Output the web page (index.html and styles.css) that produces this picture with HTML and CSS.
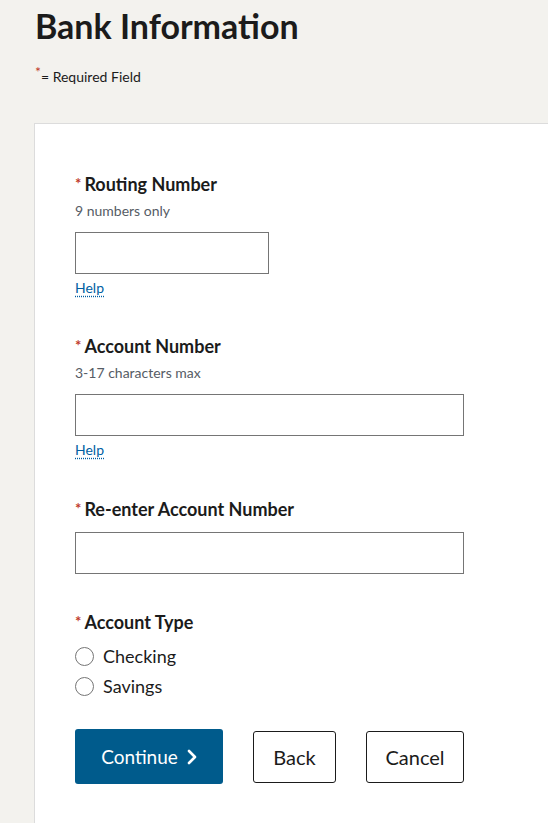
FILE: index.html
```html
<!DOCTYPE html>
<html lang="en">
<head>
<meta charset="utf-8">
<title>Bank Information</title>
<link rel="stylesheet" href="styles.css">
</head>
<body>
<div class="page">
  <h1 class="title">Bank Information</h1>
  <p class="required-note"><span class="req-star">*</span>= Required Field</p>
  <form class="card">
    <div class="field field-first">
      <label class="label" for="routing"><span class="star">*</span>Routing Number</label>
      <div class="hint">9 numbers only</div>
      <input class="input input-short" id="routing" type="text">
      <a class="help" href="#">Help</a>
    </div>
    <div class="field">
      <label class="label" for="account"><span class="star">*</span>Account Number</label>
      <div class="hint">3-17 characters max</div>
      <input class="input" id="account" type="text">
      <a class="help" href="#">Help</a>
    </div>
    <div class="field field-last">
      <label class="label" for="reaccount"><span class="star">*</span>Re-enter Account Number</label>
      <input class="input" id="reaccount" type="text">
    </div>
    <fieldset class="field radios">
      <legend class="label"><span class="star">*</span>Account Type</legend>
      <label class="radio"><span class="circle"></span>Checking</label>
      <label class="radio"><span class="circle"></span>Savings</label>
    </fieldset>
    <div class="actions">
      <button type="button" class="btn btn-primary">Continue <svg class="chev" width="10" height="16" viewBox="0 0 10 16"><path d="M2 2 L8 8 L2 14" fill="none" stroke="#fff" stroke-width="2.6" stroke-linecap="round" stroke-linejoin="round"/></svg></button>
      <button type="button" class="btn btn-outline btn-back">Back</button>
      <button type="button" class="btn btn-outline btn-cancel">Cancel</button>
    </div>
  </form>
</div>
</body>
</html>
```
FILE: styles.css
```css
* { box-sizing: border-box; }
html, body { margin: 0; padding: 0; }
body {
  background: #f3f2ee;
  font-family: "Lato", "Liberation Sans", sans-serif;
  color: #1b1b1b;
  overflow: hidden;
}
.page {
  padding: 0 0 0 34px;
}
.title {
  margin: 0;
  padding: 6px 0 0 1px;
  font-size: 34px;
  line-height: 40px;
  font-weight: 700;
  color: #1b1b1b;
}
.required-note {
  margin: 16px 0 0 1px;
  font-size: 14px;
  line-height: 20px;
}
.req-star {
  color: #c0392b;
  font-size: 14px;
  vertical-align: 5px;
}
.card {
  margin: 36px 0 0 0;
  background: #fff;
  border-top: 1px solid #dcdcdc;
  border-left: 1px solid #dcdcdc;
  padding: 47px 40px 40px 40px;
  min-height: 720px;
}
.field {
  display: flex;
  flex-direction: column;
  align-items: flex-start;
  margin: 0 0 36px 0;
}
.field-first { margin-bottom: 35px; }
.field-last { margin-bottom: 35px; }
.label {
  display: block;
  font-size: 18px;
  line-height: 24px;
  font-weight: 700;
  color: #1b1b1b;
}
.star {
  color: #c0392b;
  font-size: 15px;
  margin-right: 3px;
  vertical-align: 2px;
}
.hint {
  margin-top: 5px;
  font-size: 14px;
  line-height: 20px;
  color: #565c65;
}
.input {
  margin-top: 11px;
  width: 389px;
  height: 42px;
  border: 1px solid #757575;
  background: #fff;
  border-radius: 0;
  font: inherit;
}
.input-short { width: 194px; }
.help {
  margin-top: 4px;
  font-size: 14px;
  line-height: 20px;
  color: #005ea2;
  text-decoration: underline dotted;
  text-underline-offset: 3px;
}
.radios {
  border: 0;
  padding: 0;
  margin: 0 0 28px 0;
}
.radios .label { padding: 0; margin-bottom: 7px; }
.radio {
  display: flex;
  align-items: center;
  height: 30px;
  font-size: 18px;
  color: #1b1b1b;
}
.circle {
  width: 19px;
  height: 19px;
  border: 1.5px solid #757575;
  border-radius: 50%;
  margin-right: 9px;
  background: #fff;
}
.actions {
  display: flex;
  align-items: center;
  gap: 30px;
}
.btn {
  font-family: inherit;
  font-size: 20px;
  border-radius: 3px;
  cursor: pointer;
}
.btn-primary {
  width: 148px;
  height: 55px;
  background: #005b8c;
  color: #fff;
  border: 0;
  display: flex;
  align-items: center;
  justify-content: center;
  gap: 9px;
  font-size: 19px;
}
.chev { display: block; }
.btn-outline {
  height: 52px;
  background: #fff;
  color: #1b1b1b;
  border: 1px solid #1b1b1b;
}
.btn-back { width: 83px; }
.btn-cancel { width: 98px; }
```
